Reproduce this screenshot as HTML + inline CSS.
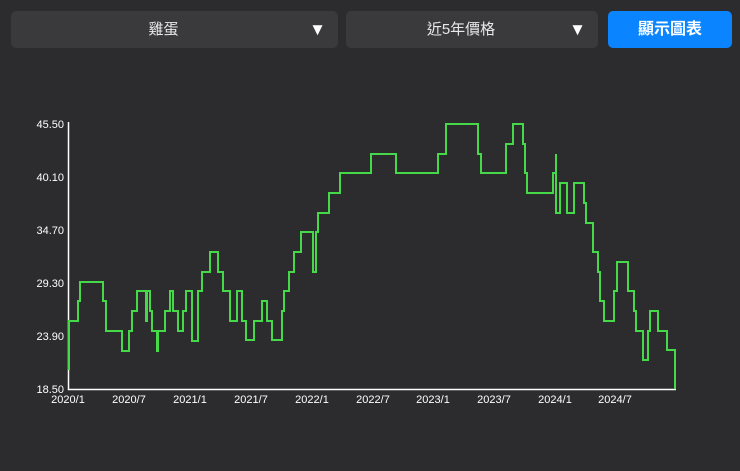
<!DOCTYPE html>
<html><head><meta charset="utf-8"><style>
body{margin:0;width:740px;height:471px;background:#2c2c2e;overflow:hidden;font-family:"Liberation Sans","Noto Sans CJK TC",sans-serif;position:relative}
.dd{position:absolute;top:11px;height:37px;background:#3a3a3c;border-radius:5px;color:#e8e8e8;font-size:15px;line-height:37px;text-align:center;box-sizing:border-box;padding-right:22px}
.dd span.a{position:absolute;right:12px;top:0;font-size:17px;color:#fff}
.btn{position:absolute;left:608px;top:11px;width:124px;height:37px;background:#0a84ff;border-radius:5px;color:#fff;font-weight:bold;font-size:16px;line-height:37px;text-align:center}
svg{position:absolute;left:0;top:0}
</style></head><body>
<div class="dd" style="left:11px;width:327px">雞蛋<span class="a">▼</span></div>
<div class="dd" style="left:346px;width:252px">近5年價格<span class="a">▼</span></div>
<div class="btn">顯示圖表</div>
<svg width="740" height="471" font-family="Liberation Sans, sans-serif" font-size="11" fill="#fff">
<g text-anchor="end">
<text x="64" y="128">45.50</text>
<text x="64" y="181">40.10</text>
<text x="64" y="234">34.70</text>
<text x="64" y="287">29.30</text>
<text x="64" y="340">23.90</text>
<text x="64" y="393">18.50</text>
</g>
<g text-anchor="middle">
<text x="68" y="403">2020/1</text>
<text x="129" y="403">2020/7</text>
<text x="190" y="403">2021/1</text>
<text x="251" y="403">2021/7</text>
<text x="312" y="403">2022/1</text>
<text x="373" y="403">2022/7</text>
<text x="433" y="403">2023/1</text>
<text x="494" y="403">2023/7</text>
<text x="555" y="403">2024/1</text>
<text x="615" y="403">2024/7</text>
</g>
<path d="M68.5,122V389.5H676" stroke="#fff" stroke-width="1.5" fill="none"/>
<path d="M69,370V321H78V301H80V282H103V301H106V331H122V351H129V331H132V311H137V291H146V321H147V291H150V311H152V331H157V351H158V331H165V311H170V291H173V311H178V331H183V311H186V291H192V341H198V291H202V272H210V252H218V272H223V291H230V321H237V291H242V321H246V340H254V321H262V301H267V321H272V340H282V311H284V291H289V272H294V252H301V232H313V272H316V232H318V213H329V193H340V173H371V154H396V173H438V154H446V124H478V154H481V173H506V144H513V124H523V144H525V173H527V193H553V173H556V154V213H560V183H567V213H574V183H584V203H586V223H593V252H598V272H600V301H604V321H614V291H617V262H628V291H634V311H636V331H643V360H648V331H650V311H658V331H667V350H675V389" stroke="#45d848" stroke-width="2" fill="none"/>
</svg>
</body></html>
